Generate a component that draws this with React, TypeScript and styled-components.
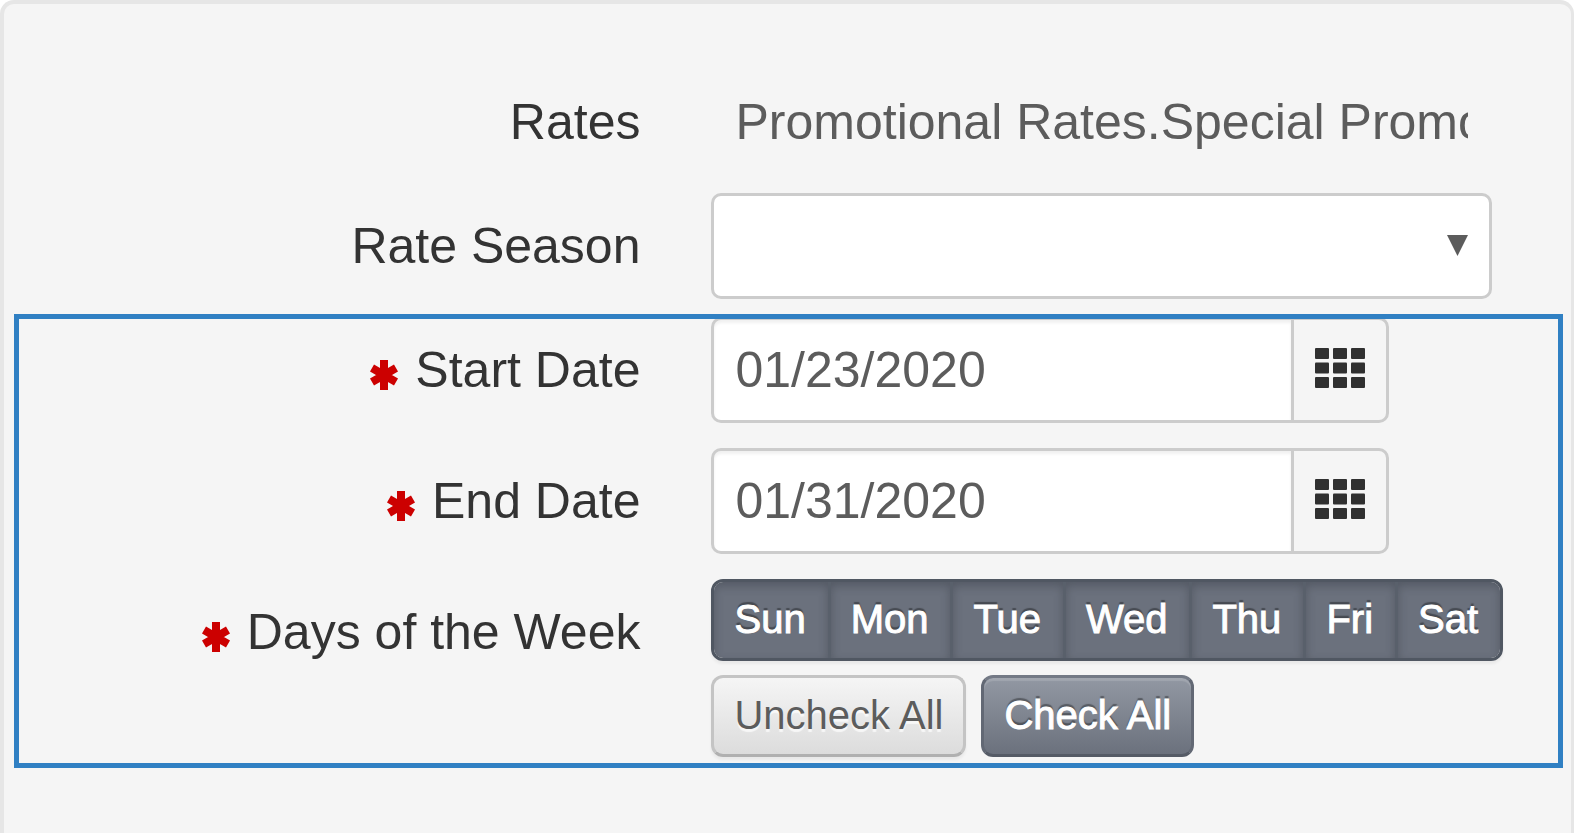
import React, { useState } from "react";
import styled, { createGlobalStyle, css } from "styled-components";

const GlobalStyle = createGlobalStyle`
  *, *::before, *::after { box-sizing: border-box; }
  body {
    margin: 0;
    background: #fff;
    font-family: "Liberation Sans", Arial, sans-serif;
  }
  button, input, select { font-family: inherit; margin: 0; }
`;

const Panel = styled.main`
  display: flex;
  flex-direction: column;
  min-height: 100vh;
  padding-top: 65px;
  overflow: hidden;
  background: #f5f5f5;
  border: 4px solid #e6e6e6;
  border-width: 4px 3px 0 4px;
  border-radius: 14px 14px 0 0;
`;

const Form = styled.form`
  display: flex;
  flex-direction: column;
  gap: 18px;
`;

const Highlight = styled.section`
  position: relative;
  display: flex;
  flex-direction: column;
  gap: 25px;
  padding-bottom: 11px;

  &::after {
    content: "";
    position: absolute;
    inset: -3px 8px 0 10px;
    border: 5px solid #3080c3;
    pointer-events: none;
  }
`;

const Row = styled.div`
  display: grid;
  grid-template-columns: 41% minmax(0, 1fr);
  column-gap: 65px;
`;

const labelStyle = css`
  display: flex;
  align-items: center;
  justify-content: flex-end;
  gap: 15px;
  height: 106px;
  padding-right: 6px;
  color: #333;
  font-size: 50px;
  white-space: nowrap;
`;

const Label = styled.label`
  ${labelStyle}
`;

const GroupLabel = styled.div`
  ${labelStyle}
`;

const AsteriskIcon = styled.svg`
  width: 30px;
  height: 32px;
  margin-top: 10px;
  stroke: #c00;
  stroke-width: 8;
`;

const Control = styled.div`
  position: relative;
  display: flex;
  margin-right: 79px;
`;

const fieldStyle = css`
  flex: 1;
  min-width: 0;
  height: 106px;
  padding: 0 21px;
  color: #5c5c5c;
  font-size: 50px;
  border: 3px solid #ccc;
  border-radius: 10px;
  outline: none;
`;

const PlainInput = styled.input`
  ${fieldStyle}
  background: transparent;
  border-color: transparent;
`;

const Select = styled.select`
  ${fieldStyle}
  appearance: none;
  background: #fff;
`;

const Caret = styled.svg`
  position: absolute;
  top: 42px;
  right: 24px;
  width: 21px;
  height: 21px;
  fill: #5c5c5c;
  pointer-events: none;
`;

const DateGroup = styled.div`
  display: flex;
  margin-right: 182px;
`;

const DateInput = styled.input`
  ${fieldStyle}
  background: #fff;
  border-right: 0;
  border-radius: 10px 0 0 10px;
  box-shadow: inset 0 3px 3px rgba(0, 0, 0, 0.06);
`;

const CalendarButton = styled.button`
  display: flex;
  align-items: center;
  justify-content: center;
  width: 98px;
  padding: 0 0 4px;
  background: #f5f5f5;
  border: 3px solid #ccc;
  border-radius: 0 10px 10px 0;
`;

const GridIcon = styled.svg`
  width: 50px;
  height: 40px;
  fill: #303030;
`;

const DayControls = styled.div`
  display: flex;
  flex-direction: column;
  align-items: flex-start;
  gap: 14px;
`;

const DayBar = styled.div`
  display: flex;
  height: 82px;
  border: 3px solid #505762;
  border-radius: 12px;
  overflow: hidden;
  box-shadow: 0 3px 3px rgba(0, 0, 0, 0.05);
`;

const lightText = css`
  color: #fff;
  text-shadow: 0 -3px 1px rgba(0, 0, 0, 0.35);
  -webkit-text-stroke: 1px #fff;
`;

const Day = styled.button<{ $on: boolean }>`
  padding: 0 22px 2px 20px;
  font-size: 40px;
  border: 0;
  background: #8b919c;
  ${lightText}
  ${({ $on }) =>
    $on &&
    css`
      background: #6b717d;
      box-shadow: inset 0 4px 10px rgba(50, 56, 66, 0.4);
    `}

  & + & {
    border-left: 3px solid #59606b;
  }
`;

const Actions = styled.div`
  display: flex;
  gap: 15px;
`;

const Action = styled.button<{ $primary?: boolean }>`
  height: 82px;
  padding: 0 20px 2px;
  color: #5c5c5c;
  font-size: 40px;
  white-space: nowrap;
  background: linear-gradient(#f5f5f5, #dcdcdc);
  border: 3px solid #c4c4c4;
  border-bottom-color: #b0b0b0;
  border-radius: 12px;
  box-shadow: 0 3px 3px rgba(0, 0, 0, 0.05);
  text-shadow: 0 3px 1px rgba(255, 255, 255, 0.7);
  ${({ $primary }) =>
    $primary &&
    css`
      background: linear-gradient(#9298a3, #6b717d);
      border-color: #737985 #626874 #555b66;
      box-shadow: inset 0 3px 1px rgba(255, 255, 255, 0.15);
      ${lightText}
    `}
`;

const days = ["Sun", "Mon", "Tue", "Wed", "Thu", "Fri", "Sat"];

const Asterisk = () => (
  <AsteriskIcon viewBox="0 0 30 32" aria-hidden="true">
    <path d="M14 1V31M2 9L26 23M26 9L2 23" />
  </AsteriskIcon>
);

const DateRow = ({ id, label, value }: { id: string; label: string; value: string }) => (
  <Row>
    <Label htmlFor={id}>
      <Asterisk />
      {label}
    </Label>
    <DateGroup>
      <DateInput id={id} type="text" defaultValue={value} required />
      <CalendarButton type="button" aria-label={`Choose ${label}`}>
        <GridIcon viewBox="0 0 50 40" aria-hidden="true">
          {[0, 14.5, 29].map((y) =>
            [0, 18, 36].map((x) => (
              <rect key={`${x}-${y}`} x={x} y={y} width="14" height="11" rx="1" />
            ))
          )}
        </GridIcon>
      </CalendarButton>
    </DateGroup>
  </Row>
);

export default function App() {
  const [selected, setSelected] = useState<string[]>(days);
  const toggle = (day: string) =>
    setSelected((now) => (now.includes(day) ? now.filter((d) => d !== day) : [...now, day]));

  return (
    <>
      <GlobalStyle />
      <Panel>
        <Form>
          <Row>
            <Label htmlFor="rates">Rates</Label>
            <Control>
              <PlainInput id="rates" type="text" readOnly value="Promotional Rates.Special Promo" />
            </Control>
          </Row>
          <Row>
            <Label htmlFor="season">Rate Season</Label>
            <Control>
              <Select id="season" defaultValue="">
                <option value="" />
              </Select>
              <Caret viewBox="0 0 21 21" aria-hidden="true">
                <path d="M0 0H21L10.5 21Z" />
              </Caret>
            </Control>
          </Row>
          <Highlight>
            <DateRow id="start" label="Start Date" value="01/23/2020" />
            <DateRow id="end" label="End Date" value="01/31/2020" />
            <Row>
              <GroupLabel id="days-label">
                <Asterisk />
                Days of the Week
              </GroupLabel>
              <DayControls>
                <DayBar role="group" aria-labelledby="days-label">
                  {days.map((day) => (
                    <Day
                      key={day}
                      type="button"
                      $on={selected.includes(day)}
                      aria-pressed={selected.includes(day)}
                      onClick={() => toggle(day)}
                    >
                      {day}
                    </Day>
                  ))}
                </DayBar>
                <Actions>
                  <Action type="button" onClick={() => setSelected([])}>
                    Uncheck All
                  </Action>
                  <Action type="button" $primary onClick={() => setSelected(days)}>
                    Check All
                  </Action>
                </Actions>
              </DayControls>
            </Row>
          </Highlight>
        </Form>
      </Panel>
    </>
  );
}
